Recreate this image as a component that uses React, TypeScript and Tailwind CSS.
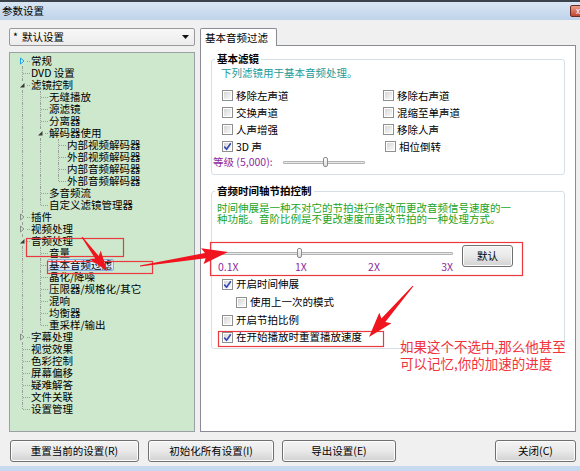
import React from 'react';

type TNode = {
  label: string;
  open?: boolean;
  closed?: boolean;
  hot?: boolean;
  selected?: boolean;
  children?: TNode[];
};

const TREE: TNode[] = [
  { label: '常规', closed: true, hot: true },
  { label: 'DVD 设置' },
  {
    label: '滤镜控制',
    open: true,
    children: [
      { label: '无缝播放' },
      { label: '源滤镜' },
      { label: '分离器' },
      {
        label: '解码器使用',
        open: true,
        children: [
          { label: '内部视频解码器' },
          { label: '外部视频解码器' },
          { label: '内部音频解码器' },
          { label: '外部音频解码器' },
        ],
      },
      { label: '多音频流' },
      { label: '自定义滤镜管理器' },
    ],
  },
  { label: '插件', closed: true },
  { label: '视频处理', closed: true },
  {
    label: '音频处理',
    open: true,
    children: [
      { label: '音量' },
      { label: '基本音频过滤', selected: true },
      { label: '晶化/降噪' },
      { label: '压限器/规格化/其它' },
      { label: '混响' },
      { label: '均衡器' },
      { label: '重采样/输出' },
    ],
  },
  { label: '字幕处理', closed: true },
  { label: '视觉效果' },
  { label: '色彩控制' },
  { label: '屏幕偏移' },
  { label: '疑难解答' },
  { label: '文件关联' },
  { label: '设置管理' },
];

type Row = { node: TNode; last: boolean; first: boolean; trail: boolean[] };

function flatten(nodes: TNode[], depth = 0, trail: boolean[] = [], out: Row[] = []): Row[] {
  nodes.forEach((n, i) => {
    const last = i === nodes.length - 1;
    out.push({ node: n, last, first: depth === 0 && i === 0, trail });
    if (n.open && n.children) flatten(n.children, depth + 1, [...trail, last], out);
  });
  return out;
}

function Expander({ node }: { node: TNode }) {
  return (
    <svg className="absolute left-[4px] top-[1px]" width="10" height="10" viewBox="0 0 10 10">
      <rect x="1" y="1" width="8" height="8" fill="#cde8cc" />
      {node.open ? (
        <polygon points="7.5,3 7.5,7.5 3,7.5" fill="#3a3a3a" />
      ) : (
        <polygon
          points="3.5,2 7,5 3.5,8"
          fill={node.hot ? '#c8ecfb' : 'none'}
          stroke={node.hot ? '#1ba1e2' : '#8c8c8c'}
          strokeWidth="1"
        />
      )}
    </svg>
  );
}

function TreeRow({ r }: { r: Row }) {
  const { node } = r;
  return (
    <div className="flex h-[12px] items-center">
      {r.trail.map((last, i) => (
        <div key={i} className="relative h-full w-[18px] shrink-0">
          {!last && <div className="absolute left-[9px] top-0 h-full border-l border-dotted border-[#9c9c9c]" />}
        </div>
      ))}
      <div className="relative h-full w-[18px] shrink-0">
        <div
          className={`absolute left-[9px] border-l border-dotted border-[#9c9c9c] ${
            r.first ? 'top-[6px] h-[6px]' : r.last ? 'top-0 h-[6px]' : 'top-0 h-full'
          }`}
        />
        <div className="absolute left-[10px] top-[6px] w-[7px] border-t border-dotted border-[#9c9c9c]" />
        {(node.open || node.closed) && <Expander node={node} />}
      </div>
      {node.selected ? (
        <span className="-ml-[2px] h-[12px] whitespace-nowrap rounded-[2px] border border-[#84acdd] bg-linear-to-b from-[#eef5fd] to-[#cbe1f8] px-[1px] text-[10.5px] leading-[10px]">
          {node.label}
        </span>
      ) : (
        <span className="whitespace-nowrap text-[10.5px] leading-[12px]">{node.label}</span>
      )}
    </div>
  );
}

function Check({ checked }: { checked?: boolean }) {
  return (
    <span className="flex h-[11px] w-[11px] shrink-0 items-center justify-center border border-[#8e8f8f] bg-white p-[1px]">
      <span className="relative flex h-full w-full items-center justify-center bg-linear-to-br from-[#d6d6d6] to-[#fafafa]">
        {checked && (
          <svg className="absolute" width="9" height="9" viewBox="0 0 9 9">
            <path d="M1.3 4.6 L3.6 7.2 L7.8 1.2" stroke="#3346b8" strokeWidth="1.6" fill="none" />
          </svg>
        )}
      </span>
    </span>
  );
}

function CheckLine({ label, checked }: { label: string; checked?: boolean }) {
  return (
    <div className="flex items-center gap-[3px]">
      <Check checked={checked} />
      <span className="whitespace-nowrap text-[10.5px] leading-[12px]">{label}</span>
    </div>
  );
}

function Thumb() {
  return (
    <div className="h-[10px] w-[5px] rounded-[2px] border border-[#8d8d8d] bg-linear-to-b from-[#fdfdfd] to-[#dcdcdc]" />
  );
}

const btn =
  'flex h-[22px] items-center justify-center rounded-[3px] border border-[#707070] bg-linear-to-b from-[#f4f4f4] via-[#e9e9e9] to-[#d2d2d2] text-[10.5px] leading-[12px] shadow-[inset_0_0_0_1px_#fcfcfc]';

function arrow(x1: number, y1: number, x2: number, y2: number, head: number, hw: number, sw: number) {
  const dx = x2 - x1;
  const dy = y2 - y1;
  const L = Math.hypot(dx, dy);
  const ux = dx / L;
  const uy = dy / L;
  const px = -uy;
  const py = ux;
  const bx = x2 - ux * head;
  const by = y2 - uy * head;
  const back = 3;
  const pts = [
    [x1 + px * 0.5, y1 + py * 0.5],
    [bx + px * sw + ux * back, by + py * sw + uy * back],
    [bx + px * hw, by + py * hw],
    [x2, y2],
    [bx - px * hw, by - py * hw],
    [bx - px * sw + ux * back, by - py * sw + uy * back],
    [x1 - px * 0.5, y1 - py * 0.5],
  ];
  return pts.map((p) => `${p[0].toFixed(1)},${p[1].toFixed(1)}`).join(' ');
}

export default function App() {
  const rows = flatten(TREE);
  return (
    <div className="relative flex h-[471px] w-[580px] flex-col overflow-hidden bg-[#f0f0f0] font-['Noto_Sans_CJK_SC',sans-serif] text-black">
      {/* title bar */}
      <div className="flex h-[20px] shrink-0 items-center border-t-2 border-[#3b424c] bg-linear-to-b from-[#d9e6f4] to-[#bfd3ea] pl-[2px]">
        <span className="text-[10.5px] leading-[12px]">参数设置</span>
        <div className="ml-auto mr-[-6px] flex h-[12px] w-[16px] items-center justify-center rounded-[2px] border border-[#6b2a22] bg-linear-to-b from-[#e8a08c] to-[#c4442c] text-[8px] leading-[8px] text-white">
          x
        </div>
      </div>

      <div className="flex flex-1 flex-col pt-[8px] pb-[4px]">
        <div className="flex h-[404px] gap-[5px] pl-[9px]">
          {/* left column */}
          <div className="flex w-[186px] flex-col gap-[6px]">
            <div className="flex h-[18px] items-center rounded-[2px] border border-[#9a9a9a] bg-linear-to-b from-[#f7f7f7] to-[#ececec] pl-[3px] pr-[5px]">
              <span className="w-[9px] text-[10.5px] leading-[12px]">*</span>
              <span className="text-[10.5px] leading-[12px]">默认设置</span>
              <svg className="ml-auto" width="7" height="4" viewBox="0 0 7 4">
                <polygon points="0,0 7,0 3.5,4" fill="#111" />
              </svg>
            </div>
            <div className="flex-1 border border-[#9aa0a6] bg-[#cde8cc] pl-[3px] pt-[2px]">
              {rows.map((r, i) => (
                <TreeRow key={i} r={r} />
              ))}
            </div>
          </div>

          {/* right column */}
          <div className="flex w-[376px] flex-col">
            <div className="relative z-10 -mb-px flex h-[18px] w-[77px] items-center rounded-t-[2px] border border-b-0 border-[#898c95] bg-white pl-[4px]">
              <span className="text-[10.5px] leading-[12px]">基本音频过滤</span>
            </div>
            <div className="flex flex-1 flex-col border border-[#898c95] bg-white pl-[10px] pr-[10px]">
              {/* group 1 */}
              <fieldset className="mt-[7px] rounded-[3px] border border-[#d5dfe5] pb-[6px] pl-[0px]">
                <legend className="ml-[3px] px-[2px] text-[10.5px] font-bold leading-[12px]">基本滤镜</legend>
                <div className="pl-[9px] pt-[2px] text-[10.5px] leading-[12px] text-[#1a9b9b]">
                  下列滤镜用于基本音频处理。
                </div>
                <div className="mt-[8px] grid grid-cols-[161px_1fr] pl-[10px]">
                  <div className="flex h-[17px] items-center"><CheckLine label="移除左声道" /></div>
                  <div className="flex h-[17px] items-center"><CheckLine label="移除右声道" /></div>
                  <div className="flex h-[17px] items-center"><CheckLine label="交换声道" /></div>
                  <div className="flex h-[17px] items-center"><CheckLine label="混缩至单声道" /></div>
                  <div className="flex h-[17px] items-center"><CheckLine label="人声增强" /></div>
                  <div className="flex h-[17px] items-center"><CheckLine label="移除人声" /></div>
                  <div className="flex h-[17px] items-center"><CheckLine label="3D 声" checked /></div>
                  <div className="flex h-[17px] items-center pl-[2px]"><CheckLine label="相位倒转" /></div>
                </div>
                <div className="mt-[1px] flex h-[12px] items-center pl-[1px]">
                  <span className="w-[70px] whitespace-nowrap text-[10.5px] leading-[12px] text-[#8f2a9e]">等级 (5,000):</span>
                  <div className="relative flex h-[12px] w-[82px] items-center">
                    <div className="h-[3px] w-full rounded-[1px] border border-[#b3b3b3] bg-[#e6e9ea]" />
                    <div className="absolute left-[40px] top-[1px]"><Thumb /></div>
                  </div>
                </div>
              </fieldset>

              {/* group 2 */}
              <fieldset className="mt-[10px] rounded-[3px] border border-[#d5dfe5] pb-[3px]">
                <legend className="ml-[3px] px-[2px] text-[10.5px] font-bold leading-[12px]">音频时间轴节拍控制</legend>
                <div className="pl-[5px] pt-[5px] text-[10.5px] leading-[11px] text-[#23a323]">
                  <div className="whitespace-nowrap">时间伸展是一种不对它的节拍进行修改而更改音频信号速度的一</div>
                  <div className="whitespace-nowrap">种功能。音阶比例是不更改速度而更改节拍的一种处理方式。</div>
                </div>
                <div className="mt-[21px] flex pl-[3px]">
                  <div className="flex w-[238px] flex-col">
                    <div className="relative flex h-[16px] items-center">
                      <div className="h-[3px] w-full rounded-[1px] border border-[#b3b3b3] bg-[#e6e9ea]" />
                      <div className="absolute left-[82px] top-[3px]"><Thumb /></div>
                    </div>
                    <div className="flex h-[12px] pl-[3px] text-[10.5px] leading-[12px] text-[#8f2a9e]">
                      <span className="w-[78px]">0.1X</span>
                      <span className="w-[74px]">1X</span>
                      <span className="w-[74px]">2X</span>
                      <span>3X</span>
                    </div>
                  </div>
                  <div className={`${btn} ml-[9px] h-[16px] w-[51px]`}>默认</div>
                </div>
                <div className="mt-[2px] flex h-[18px] items-center pl-[10px]"><CheckLine label="开启时间伸展" checked /></div>
                <div className="flex h-[18px] items-center pl-[24px]"><CheckLine label="使用上一次的模式" /></div>
                <div className="flex h-[18px] items-center pl-[10px]"><CheckLine label="开启节拍比例" /></div>
                <div className="flex h-[16px] items-center pl-[10px]"><CheckLine label="在开始播放时重置播放速度" checked /></div>
              </fieldset>
            </div>
          </div>
        </div>

        {/* bottom buttons */}
        <div className="mt-[8px] flex pl-[10px] pr-[4px]">
          <div className={`${btn} w-[129px]`}>重置当前的设置(R)</div>
          <div className={`${btn} ml-[9px] w-[126px]`}>初始化所有设置(I)</div>
          <div className={`${btn} ml-[8px] w-[114px]`}>导出设置(E)</div>
          <div className={`${btn} ml-auto w-[81px]`}>关闭(C)</div>
        </div>
      </div>
      <div className="h-[5px] shrink-0 bg-[#c6d9ee]" />

      {/* annotations */}
      <svg className="pointer-events-none absolute left-0 top-0" width="580" height="471" viewBox="0 0 580 471">
        <g fill="none" stroke="#ea3a40" strokeWidth="1.2">
          <rect x="26.5" y="238.5" width="97" height="18" />
          <rect x="47.5" y="261.5" width="105" height="12" />
          <rect x="210.5" y="242.5" width="312" height="33" />
          <rect x="218.5" y="331.5" width="165" height="15" />
        </g>
        <g fill="#f0141e">
          <polygon points={arrow(82, 237, 107, 271, 20, 7, 2.2)} />
          <polygon points={arrow(140, 266, 228, 252, 26, 8, 2.6)} />
          <polygon points={arrow(413, 286, 369, 337, 25, 8, 2.6)} />
        </g>
      </svg>
      <div className="pointer-events-none absolute left-[400px] top-[338px] text-[13.5px] leading-[16.5px] text-[#f2323a]">
        <div className="whitespace-nowrap">如果这个不选中,那么他甚至</div>
        <div className="whitespace-nowrap">可以记忆,你的加速的进度</div>
      </div>
    </div>
  );
}
